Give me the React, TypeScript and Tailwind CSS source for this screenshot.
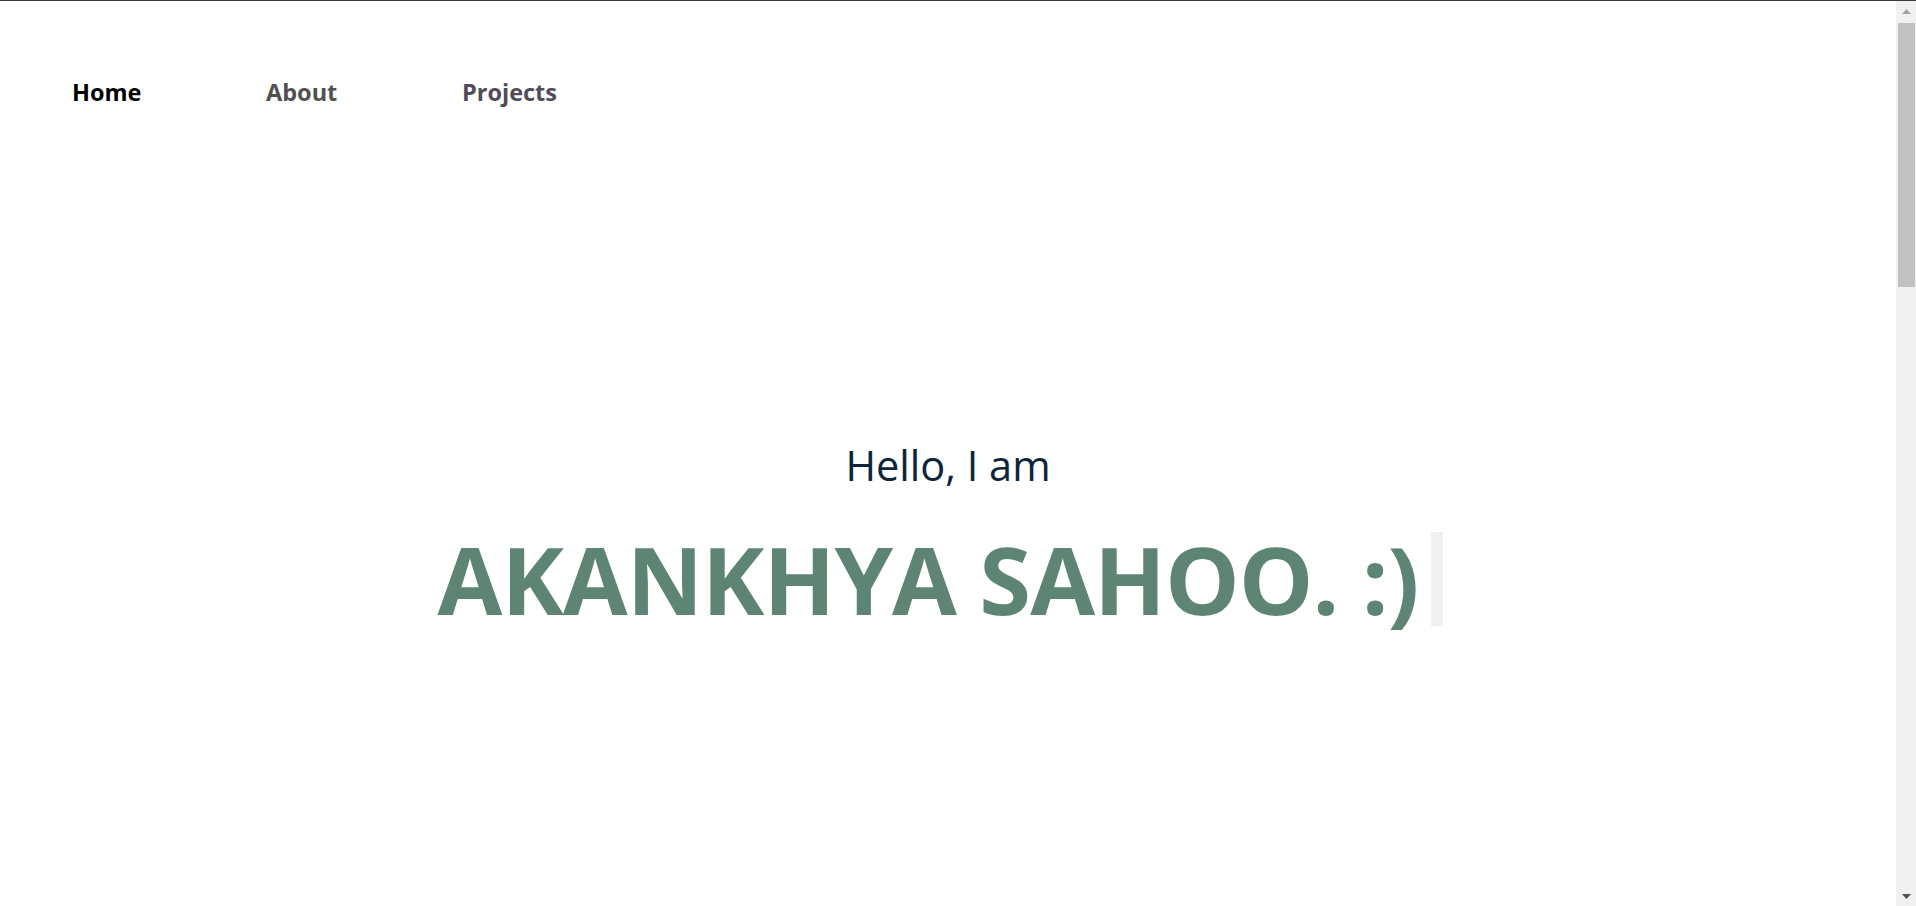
import React from 'react';

// Drawn browser scrollbar on the right edge, as in the screenshot
const Scrollbar = () => (
  <aside className="w-[20px] h-full bg-[#f1f1f1] flex flex-col items-center">
    <div className="h-[20px] flex items-center justify-center">
      <svg width="9" height="5" viewBox="0 0 9 5">
        <path d="M4.5 0 L9 5 L0 5 Z" fill="#a3a3a3" />
      </svg>
    </div>
    <div className="w-[17px] h-[264px] mt-[2px] bg-[#c1c1c1]" />
    <div className="flex-1" />
    <div className="h-[20px] flex items-center justify-center">
      <svg width="9" height="5" viewBox="0 0 9 5">
        <path d="M0 0 L9 0 L4.5 5 Z" fill="#505050" />
      </svg>
    </div>
  </aside>
);

const App = () => {
  const links = ['Home', 'About', 'Projects'];

  return (
    <div className="h-screen flex flex-col bg-white border-t border-[#3a3a3a] font-['Open_Sans',_'Noto_Sans',_sans-serif]">
      <div className="flex flex-1 min-h-0">
        <main className="flex-1 overflow-hidden">
          {/* Nav */}
          <nav className="flex items-center pl-[72px] pt-[74px]">
            {links.map((link, i) => (
              <a
                key={link}
                href={`#${link.toLowerCase()}`}
                className={`text-[23.5px] font-bold ${i === 0 ? 'text-black w-[194px]' : i === 1 ? 'text-[#505050] w-[196px]' : 'text-[#4f4b5a]'}`}
              >
                {link}
              </a>
            ))}
          </nav>

          {/* Hero */}
          <section id="home" className="flex flex-col items-center pt-[330px]">
            <p className="text-[41.5px] text-[#0d2538] leading-tight">Hello, I am</p>
            <div className="flex items-center mt-[40px] pr-[15px]">
              <h1 className="text-[94px] font-bold text-[#5e8574] leading-none tracking-[-1px]">AKANKHYA SAHOO. :)</h1>
              <span className="ml-[13px] w-[12px] h-[94px] bg-[#eef1f0]" />
            </div>
          </section>
        </main>
        <Scrollbar />
      </div>
    </div>
  );
};

export default App;
